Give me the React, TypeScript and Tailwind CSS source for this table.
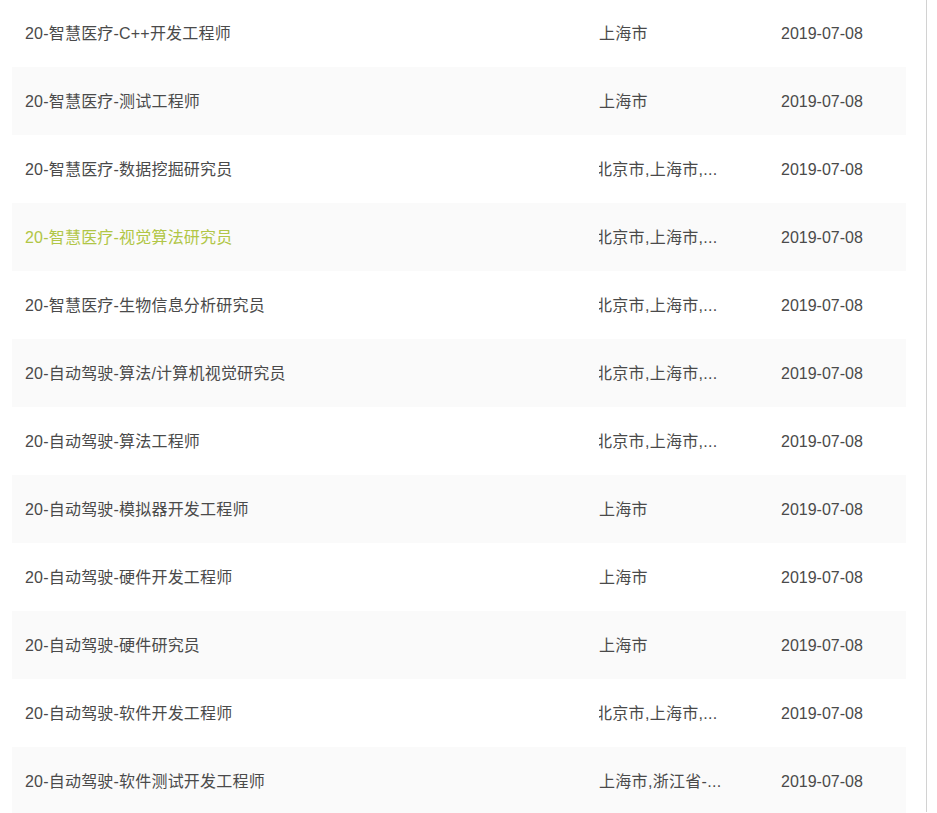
import React from "react";

const rows: { t: string; loc: string; hl?: boolean }[] = [
  { t: "20-智慧医疗-C++开发工程师", loc: "上海市" },
  { t: "20-智慧医疗-测试工程师", loc: "上海市" },
  { t: "20-智慧医疗-数据挖掘研究员", loc: "北京市,上海市,..." },
  { t: "20-智慧医疗-视觉算法研究员", loc: "北京市,上海市,...", hl: true },
  { t: "20-智慧医疗-生物信息分析研究员", loc: "北京市,上海市,..." },
  { t: "20-自动驾驶-算法/计算机视觉研究员", loc: "北京市,上海市,..." },
  { t: "20-自动驾驶-算法工程师", loc: "北京市,上海市,..." },
  { t: "20-自动驾驶-模拟器开发工程师", loc: "上海市" },
  { t: "20-自动驾驶-硬件开发工程师", loc: "上海市" },
  { t: "20-自动驾驶-硬件研究员", loc: "上海市" },
  { t: "20-自动驾驶-软件开发工程师", loc: "北京市,上海市,..." },
  { t: "20-自动驾驶-软件测试开发工程师", loc: "上海市,浙江省-..." },
];

export default function App() {
  return (
    <div
      className="h-[813px] w-[937px] overflow-hidden bg-white text-[16px] text-[#4a4a4a]"
      style={{ fontFamily: '"Liberation Sans", "Noto Sans CJK SC", sans-serif' }}
    >
      <div className="h-full w-[927px] border-r border-[#d2d2d2] pl-3 pr-5">
        <div className="-mt-px flex flex-col">
          {rows.map((r, i) => (
            <div
              key={i}
              className={`grid h-[68px] shrink-0 grid-cols-[574px_182px_1fr] items-center pl-[13px] pt-[2px] ${
                i % 2 === 1 ? "bg-[#fafafa]" : "bg-white"
              }`}
            >
              <div className={`whitespace-nowrap tracking-[0.2px] ${r.hl ? "text-[#b1c646]" : ""}`}>{r.t}</div>
              <div className="w-[125px] overflow-hidden whitespace-nowrap">
                <span className={`inline-block tracking-[0.3px] ${r.loc.startsWith("北") ? "-ml-[3px]" : ""}`}>{r.loc}</span>
              </div>
              <div className="whitespace-nowrap">2019-07-08</div>
            </div>
          ))}
        </div>
      </div>
    </div>
  );
}
